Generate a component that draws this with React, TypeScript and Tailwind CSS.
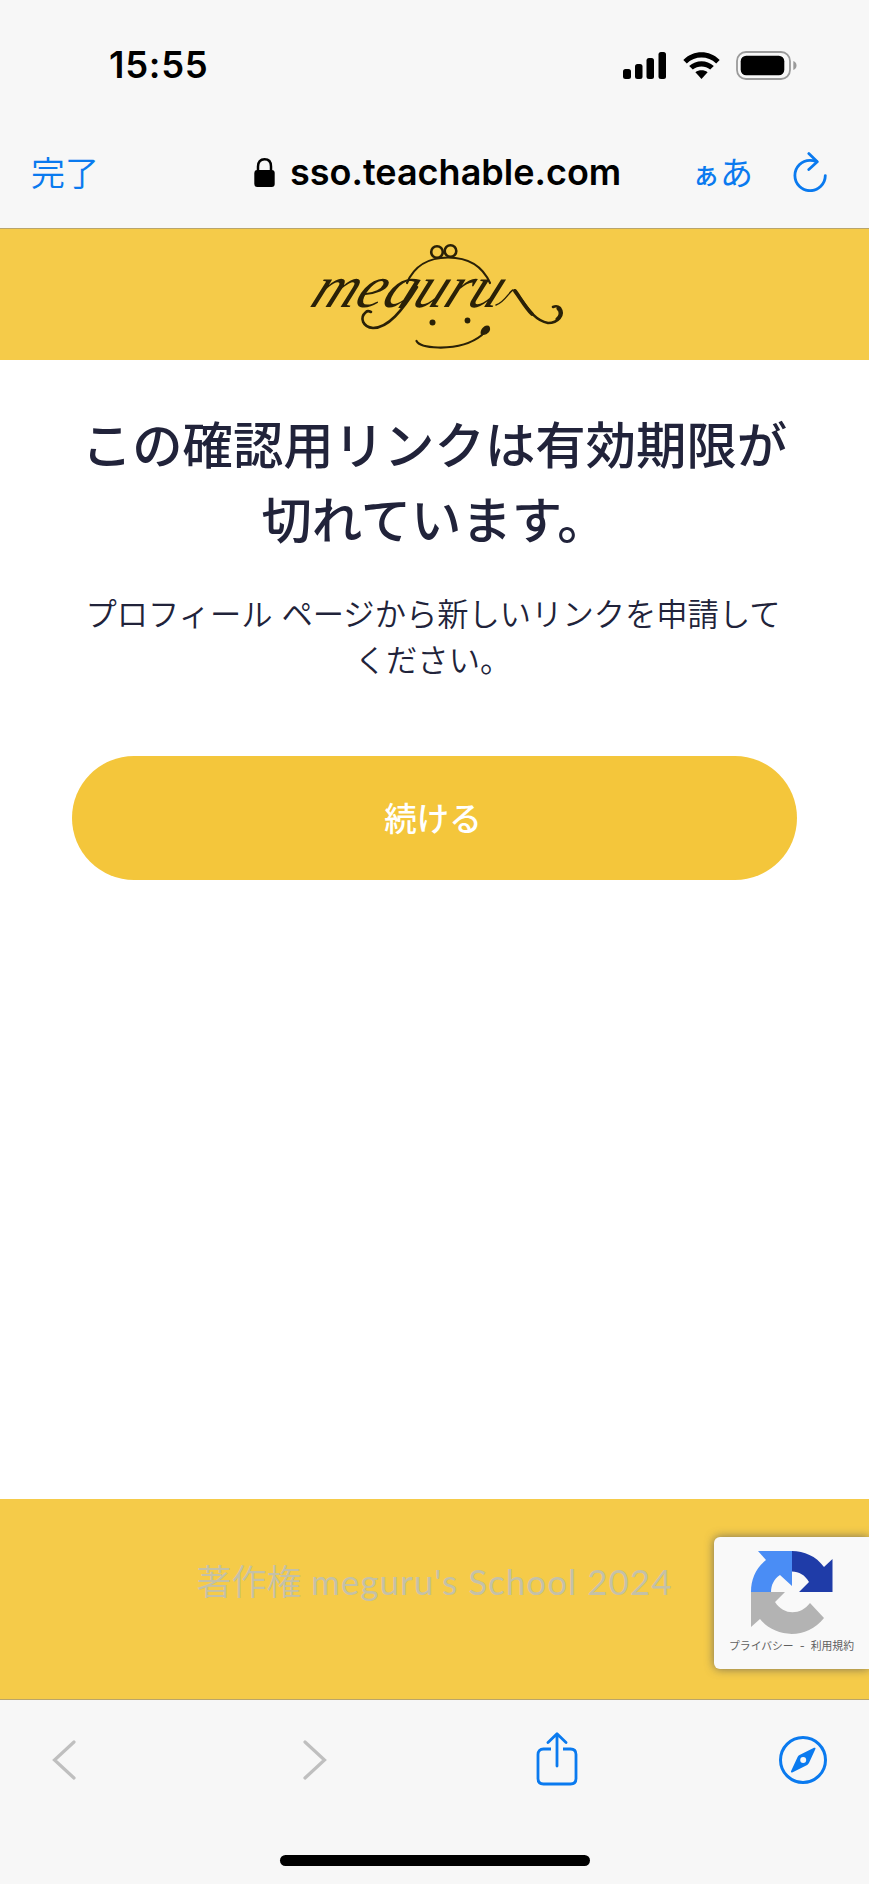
import React from 'react'

const StatusIcons: React.FC = () => (
  <div className="flex items-center">
    <svg width="43" height="27" viewBox="0 0 43 27">
      <rect x="0" y="17" width="8" height="10" rx="2.5" />
      <rect x="12" y="12" width="7.5" height="15" rx="2.5" />
      <rect x="23.5" y="6" width="7.5" height="21" rx="2.5" />
      <rect x="35.5" y="0" width="7.5" height="27" rx="2.5" />
    </svg>
    <svg className="ml-[17px]" width="37" height="27" viewBox="0 0 37 27">
      <path d="M0.3 7.9C10.5 -2.4 26.5 -2.4 36.7 7.9L33.2 11.4C24.9 3.6 12.1 3.6 3.8 11.4Z" />
      <path d="M6.2 14C13.2 7.6 23.8 7.6 30.8 14L27.2 17.6C22.2 13.4 14.8 13.4 9.8 17.6Z" />
      <path d="M12.4 20.3C16 17.7 21 17.7 24.6 20.3L18.5 26.9Z" />
    </svg>
    <svg className="ml-4" width="61" height="29" viewBox="0 0 61 29">
      <rect x="1" y="1" width="53" height="27" rx="9" fill="none" stroke="#9a9a9a" strokeWidth="1.8" />
      <rect x="4.7" y="4.7" width="43.6" height="19.6" rx="5.5" />
      <path d="M57.3 10C61.6 11.5 61.6 17.5 57.3 19Z" fill="#9a9a9a" />
    </svg>
  </div>
)

const LockIcon: React.FC = () => (
  <svg width="21" height="29" viewBox="0 0 21 29">
    <path d="M4 14V8.5C4 4 6.5 1.3 10.5 1.3S17 4 17 8.5V14" fill="none" stroke="#000" strokeWidth="2.5" />
    <rect x="0.3" y="12" width="20.4" height="17" rx="3" />
  </svg>
)

const ReloadIcon: React.FC = () => (
  <svg
    width="34"
    height="40"
    viewBox="0 0 34 40"
    fill="none"
    stroke="#0a7aef"
    strokeWidth="2.8"
    strokeLinecap="round"
    strokeLinejoin="round"
  >
    <path d="M32.3 23.6A15.2 15.2 0 1 1 17 8.3C19.4 8.3 21.5 8.8 23.6 9.6" />
    <path d="M15.8 1.6L24.3 9.8L15.8 17.5" />
  </svg>
)

const Logo: React.FC = () => (
  <svg className="w-[290px] h-[131px]" viewBox="0 4 290 131" fill="none" stroke="#2a2107" strokeLinecap="round">
    <defs>
      <clipPath id="wordmark">
        <rect x="0" y="40" width="290" height="43" />
      </clipPath>
    </defs>
    <g clipPath="url(#wordmark)">
      <text
        x="0"
        y="0"
        transform="translate(18 82) skewX(-24)"
        textLength="188"
        lengthAdjust="spacingAndGlyphs"
        fill="#2a2107"
        stroke="none"
        className="font-['Liberation_Serif'] italic text-[60px]"
      >
        meguru
      </text>
    </g>
    {/* hat */}
    <circle cx="147" cy="27" r="5.8" strokeWidth="2.6" />
    <circle cx="160.5" cy="26" r="5.8" strokeWidth="2.6" />
    <path d="M117 58C124 41 139 32.5 158 32.5C177 32.5 192 40 200 58" strokeWidth="2.2" />
    {/* tails */}
    <path d="M127 62C112 86 98 103 83 103C73 102 69 93 76 87C77 86 79 86 81 87" strokeWidth="2.6" />
    <path d="M206 80C214 78 219 67 223 65" strokeWidth="1.4" />
    <path d="M224.500 65.500C234 77 242 95 258 98C268 98 275 90 270 83C268 81 265 81 263 82" strokeWidth="2.6" />
    <path d="M225 66C231 74 235 82 242 89" strokeWidth="3.8" />
    <path d="M268 83.500C272 87 270 92 267 94" strokeWidth="3.2" />
    {/* face */}
    <circle cx="142.500" cy="97.500" r="3" fill="#2a2107" stroke="none" />
    <circle cx="177.500" cy="95.500" r="2.900" fill="#2a2107" stroke="none" />
    <path d="M126.500 116C128 119 132 122 148 122.500C168 123 182 118 192 110" strokeWidth="2.2" />
    <path d="M191.500 109C190.500 105 195 100 198.500 101.500C201 105 197 110.500 191.500 109Z" fill="#2a2107" strokeWidth="1.5" />
  </svg>
)

const RecaptchaIcon: React.FC = () => (
  <svg width="82" height="83" viewBox="0 0 82 83">
    <path d="M41 0H7L15 9C5 17 0 28 0 41H20C20 34 23 28 29 24L41 35Z" fill="#4a8df5" />
    <path d="M41 0C53 0 65 5 73 16L81.500 8V41H48L58 31C54 24 48 20.500 41 20.500Z" fill="#1f3ca8" />
    <path d="M0 41H34L24 51C33 65 50 64 59 52L73 67C56 89 24 87 9 68L0 76Z" fill="#b3b3b3" />
  </svg>
)

const RecaptchaBadge: React.FC = () => (
  <div className="absolute right-0 top-[38px] w-[155px] h-[132px] rounded-l-md bg-[#f9f9f9] shadow-[0_0_10px_rgba(90,90,90,0.8)] flex flex-col items-center pt-[14px]">
    <RecaptchaIcon />
    <p className="mt-[3px] text-[10.8px] leading-5 whitespace-nowrap text-[#606060]">プライバシー&nbsp; -&nbsp; 利用規約</p>
  </div>
)

const Toolbar: React.FC = () => (
  <nav className="h-[185px] bg-[#f7f7f7] border-t border-[#b9a56b] flex flex-col items-center">
    <div className="w-full h-[120px] flex items-center pl-[52px] pr-[41px]">
      <svg width="24" height="40" viewBox="0 0 24 40" fill="none" stroke="#bfbfbf" strokeWidth="3.2" strokeLinecap="round">
        <path d="M22 2L2.500 20L22 38" />
      </svg>
      <svg className="ml-[227px]" width="24" height="40" viewBox="0 0 24 40" fill="none" stroke="#bfbfbf" strokeWidth="3.2" strokeLinecap="round">
        <path d="M2 2L21.500 20L2 38" />
      </svg>
      <svg className="ml-[209px] -mt-[3px]" width="42" height="54" viewBox="0 0 42 54" fill="none" stroke="#0a7aef" strokeWidth="2.800" strokeLinecap="round" strokeLinejoin="round">
        <path d="M15 17H7.500C4 17 2 19 2 22.500V46.500C2 50 4 52 7.500 52H34.500C38 52 40 50 40 46.500V22.500C40 19 38 17 34.500 17H27" strokeLinecap="butt" />
        <path d="M21 34V2M12 10.500L21 1.800L30 10.500" />
      </svg>
      <svg className="ml-auto" width="50" height="50" viewBox="0 0 50 50">
        <circle cx="25" cy="25" r="22.500" fill="none" stroke="#0a7aef" strokeWidth="3" />
        <path d="M36 12.800C37 12.300 37.900 13 37.400 14.100L31.200 27.600C30.800 28.500 30.200 29.300 29.200 29.900L14.700 37.200C13.500 37.800 12.600 37 13.100 35.900L19.600 21.900C20 21 20.700 20.500 21.500 20Z" fill="#0a7aef" />
        <circle cx="25.200" cy="25" r="3" fill="#f7f7f7" />
      </svg>
    </div>
    <div className="mt-[35px] w-[310px] h-[11px] rounded-full bg-black" />
  </nav>
)

export default function App() {
  return (
    <div lang="ja" className="w-[869px] h-[1884px] flex flex-col bg-white overflow-hidden font-['Inter','Noto_Sans_CJK_JP',sans-serif]">
      <header className="h-[229px] bg-[#f7f7f7] border-b border-[#b9a56b]">
        <div className="h-[130px] flex items-center justify-between pl-[109px] pr-[72px]">
          <span className="text-[36.5px] font-semibold tracking-[0.7px]">15:55</span>
          <StatusIcons />
        </div>
        <div className="h-[84px] flex items-center">
          <span className="ml-[31px] w-[223px] pt-[3px] text-[34px] font-[350] text-[#0a7aef]">完了</span>
          <LockIcon />
          <span className="ml-[15px] w-[402px] text-[36px] font-semibold whitespace-nowrap">sso.teachable.com</span>
          <span className="w-[101px] pt-[3px] flex items-baseline text-[#0a7aef]">
            <span className="text-[28px] font-medium">ぁ</span>
            <span className="text-[33px]">あ</span>
          </span>
          <ReloadIcon />
        </div>
      </header>

      <div className="h-[131px] bg-[#f5cb49] flex justify-center">
        <Logo />
      </div>

      <main className="flex-1 px-[72px] pt-[48px] text-center text-[#21233a]">
        <h1 className="text-[50.4px] leading-[75px] font-medium whitespace-nowrap">
          この確認用リンクは有効期限が
          <br />
          切れています。
        </h1>
        <p className="mt-[34px] pr-[3px] text-[31.3px] leading-[46px] font-[350] whitespace-nowrap">
          プロフィール ページから新しいリンクを申請して
          <br />
          ください。
        </p>
        <button className="mt-[72px] w-full h-[124px] rounded-full bg-[#f4c63b] pt-[5px] pr-[3px] text-[32.5px] font-medium text-white">
          続ける
        </button>
      </main>

      <footer className="relative h-[200px] bg-[#f5cb49] flex justify-center pt-[57px]">
        <p className="text-[35px] leading-[50px] font-[350] whitespace-nowrap text-[#c4c1a8] font-['Lato','Noto_Sans_CJK_JP',sans-serif]">
          著作権 <span className="font-normal tracking-[1px]">meguru's School 2024</span>
        </p>
        <RecaptchaBadge />
      </footer>

      <Toolbar />
    </div>
  )
}
